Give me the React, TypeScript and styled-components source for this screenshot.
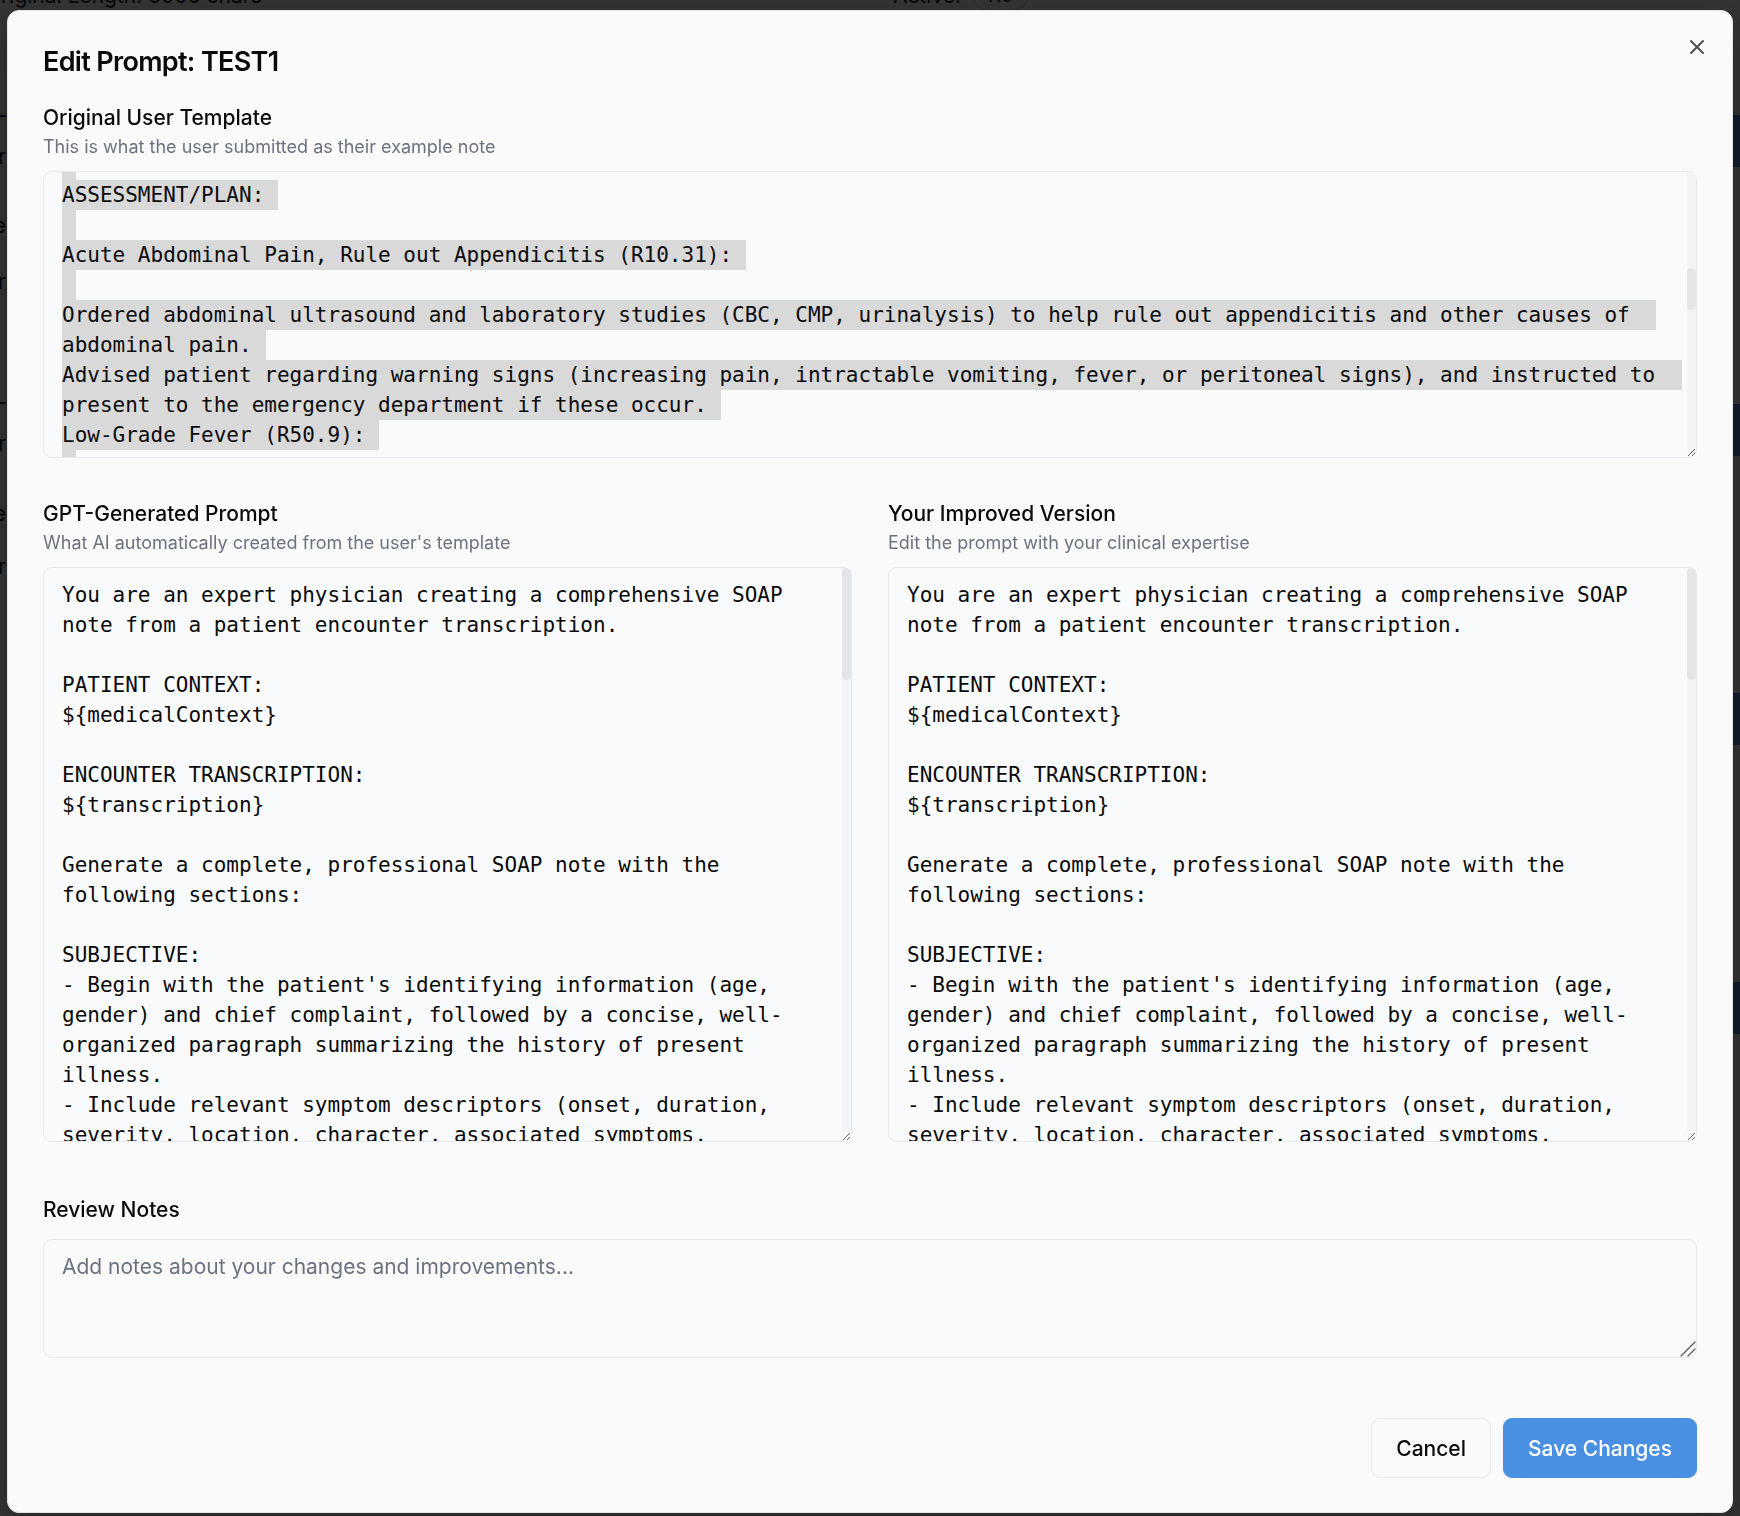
import React, { useLayoutEffect, useRef } from "react";
import styled, { createGlobalStyle } from "styled-components";
import { X } from "lucide-react";

const UI = `Inter, "Noto Sans", "Liberation Sans", sans-serif`;
const MONO = `"DejaVu Sans Mono", "Liberation Mono", monospace`;

const GlobalStyle = createGlobalStyle`
  *, *::before, *::after { box-sizing: border-box; }
  html, body { margin: 0; padding: 0; }
  body {
    background: #ffffff;
    font-family: ${UI};
    overflow: hidden;
  }
`;

/* ---------- page behind the dialog ---------- */

const Page = styled.div`
  width: 1740px;
  height: 1516px;
  overflow: hidden;
  background: #ffffff;
  font-family: ${UI};
  font-size: 21px;
  color: #111827;
`;

const StatsRow = styled.div`
  display: grid;
  grid-template-columns: 896px auto auto;
  align-items: center;
  column-gap: 12px;
  height: 30px;
  line-height: 30px;
  margin-top: -19px;
  margin-left: -15px;
  justify-content: start;
`;

const StatText = styled.span`
  white-space: nowrap;
`;

const StatBadge = styled.span`
  display: inline-flex;
  align-items: center;
  height: 30px;
  padding: 0 14px;
  border: 1px solid #d1d5db;
  border-radius: 15px;
  font-size: 18px;
`;

const PageBody = styled.div`
  display: grid;
  grid-template-columns: 6px 1fr;
`;

const EdgeColumn = styled.div`
  display: flex;
  flex-direction: column;
  align-items: flex-end;
  padding-top: 90px;
  line-height: 30px;
`;

const EdgeText = styled.span<{ $gap: number }>`
  white-space: nowrap;
  margin-top: ${(p) => p.$gap}px;
`;

const CardList = styled.div`
  display: flex;
  flex-direction: column;
  align-items: flex-end;
  gap: 237px;
  padding-top: 104px;
`;

const PageButton = styled.div`
  width: 140px;
  height: 52px;
  background: #5f91e1;
  border-radius: 9px 0 0 9px;
`;

/* ---------- overlay + dialog ---------- */

const Overlay = styled.div`
  position: fixed;
  inset: 0;
  background: rgba(0, 0, 0, 0.8);
`;

const Dialog = styled.div`
  position: fixed;
  top: 10px;
  left: 7px;
  width: 1726px;
  height: 1503px;
  display: flex;
  flex-direction: column;
  padding: 35px;
  background: #fafafa;
  border: 1px solid #e4e4e7;
  border-radius: 12px;
  box-shadow: 0 15px 40px rgba(0, 0, 0, 0.25);
  font-family: ${UI};
  color: #0a0a0a;
`;

const CloseButton = styled.button`
  position: absolute;
  top: 24px;
  right: 23px;
  width: 24px;
  height: 24px;
  padding: 0;
  border: none;
  background: none;
  color: #0a0a0a;
  opacity: 0.7;
  display: flex;
  align-items: center;
  justify-content: center;
  cursor: pointer;
`;

const Title = styled.h2`
  margin: 0;
  font-size: 27px;
  line-height: 32px;
  font-weight: 600;
  letter-spacing: -0.675px;
  color: #0a0a0a;
`;

const Section = styled.section<{ $gap: number }>`
  display: flex;
  flex-direction: column;
  margin-top: ${(p) => p.$gap}px;
  min-width: 0;
`;

const FieldLabel = styled.label`
  font-size: 21px;
  line-height: 21px;
  font-weight: 500;
  color: #0a0a0a;
`;

const FieldHint = styled.p`
  margin: 7px 0 0;
  font-size: 18px;
  line-height: 24px;
  color: #6b7280;
`;

/* a frame that holds a field and the things drawn over its edge */
const FieldFrame = styled.div<{ $gap: number }>`
  position: relative;
  margin-top: ${(p) => p.$gap}px;
`;

const ScrollTrack = styled.div`
  position: absolute;
  top: 1px;
  right: 1px;
  bottom: 10px;
  width: 9px;
  background: #f3f4f6;
  border-top-right-radius: 8px;
  pointer-events: none;
`;

const ScrollThumb = styled.div<{ $top: number; $height: number }>`
  position: absolute;
  left: 0;
  right: 0;
  top: ${(p) => p.$top}px;
  height: ${(p) => p.$height}px;
  background: #e3e5e9;
  border-radius: 5px;
`;

const ResizeGrip = styled.svg`
  position: absolute;
  right: 1px;
  bottom: 1px;
  width: 16px;
  height: 16px;
  pointer-events: none;
`;

const TemplateBox = styled.div`
  height: 287px;
  padding: 12px 18px;
  border: 1px solid #e8e9ec;
  border-radius: 9px;
  background: #f9fafb;
  overflow-y: scroll;
  resize: vertical;
  font-family: ${MONO};
  font-size: 21px;
  line-height: 30px;
  color: #0a0a0a;
`;

const TemplateLine = styled.div`
  min-height: 30px;
  white-space: pre-wrap;
`;

const Selected = styled.span`
  background: #d9d9d9;
  padding: 2.78px 14px 2.78px 0;
  -webkit-box-decoration-break: clone;
  box-decoration-break: clone;
`;

const PromptGrid = styled.div<{ $gap: number }>`
  display: grid;
  grid-template-columns: 1fr 1fr;
  column-gap: 36px;
  margin-top: ${(p) => p.$gap}px;
`;

const PromptArea = styled.textarea`
  display: block;
  width: 100%;
  height: 575px;
  padding: 12px 18px;
  border: 1px solid #e8e9ec;
  border-radius: 9px;
  background: #f9fafb;
  resize: vertical;
  outline: none;
  font-family: ${MONO};
  font-size: 21px;
  line-height: 30px;
  color: #0a0a0a;
`;

const NotesArea = styled.textarea`
  display: block;
  width: 100%;
  height: 119px;
  padding: 12px 18px;
  border: 1px solid #e8e9ec;
  border-radius: 9px;
  background: #fafafa;
  resize: none;
  outline: none;
  font-family: ${UI};
  font-size: 21px;
  line-height: 30px;
  color: #0a0a0a;
  &::placeholder { color: #6b7280; }
`;

const Footer = styled.div`
  display: flex;
  justify-content: flex-end;
  gap: 12px;
  margin-top: 60px;
`;

const ActionButton = styled.button<{ $primary?: boolean }>`
  height: 60px;
  padding: 0 24px;
  border-radius: 9px;
  border: 1px solid ${(p) => (p.$primary ? "#4a90e2" : "#e8e9ec")};
  background: ${(p) => (p.$primary ? "#4a90e2" : "#fafafa")};
  color: ${(p) => (p.$primary ? "#ffffff" : "#0a0a0a")};
  font-family: ${UI};
  font-size: 21px;
  font-weight: 500;
  cursor: pointer;
`;

/* ---------- data ---------- */

const TEMPLATE_LINES: string[] = [
  "SUBJECTIVE:",
  "",
  "Chief Complaint: Abdominal pain and low-grade fever for 2 days.",
  "",
  "HPI: 24-year-old female presents with periumbilical pain that has migrated to the right lower quadrant.",
  "Pain is constant, rated 6/10, worse with movement. Associated with nausea, decreased appetite, and subjective fevers.",
  "Denies vomiting, diarrhea, dysuria, vaginal discharge, or recent travel.",
  "",
  "OBJECTIVE:",
  "",
  "Vitals: T 100.4 F, HR 96, BP 118/74, RR 16, SpO2 99% on room air.",
  "General: Alert, uncomfortable-appearing, in mild distress.",
  "Abdomen: Tenderness to palpation in the right lower quadrant with voluntary guarding. Positive Rovsing sign. No rebound.",
  "Cardiovascular: Regular rate and rhythm, no murmurs.",
  "Lungs: Clear to auscultation bilaterally.",
  "",
  "Labs: Point-of-care urine pregnancy test negative. CBC and CMP pending.",
  "Imaging: Right lower quadrant ultrasound ordered.",
  "",
  "MDM: Presentation concerning for early appendicitis; differential includes ovarian pathology and mesenteric adenitis.",
  "",
  "ASSESSMENT/PLAN:",
  "",
  "Acute Abdominal Pain, Rule out Appendicitis (R10.31):",
  "",
  "Ordered abdominal ultrasound and laboratory studies (CBC, CMP, urinalysis) to help rule out appendicitis and other causes of abdominal pain.",
  "Advised patient regarding warning signs (increasing pain, intractable vomiting, fever, or peritoneal signs), and instructed to present to the emergency department if these occur.",
  "Low-Grade Fever (R50.9):",
  "",
  "Recommended acetaminophen 650 mg every 6 hours as needed for fever and discomfort.",
  "Encouraged oral hydration as tolerated.",
  "",
  "Nausea (R11.0):",
  "",
  "Prescribed ondansetron 4 mg ODT every 8 hours as needed for nausea.",
  "",
  "Disposition:",
  "",
  "Patient will be contacted with ultrasound and laboratory results.",
  "If imaging is positive, will refer to general surgery for urgent evaluation.",
  "Follow up in clinic in 24-48 hours or sooner if symptoms worsen.",
  "",
  "Patient Education:",
  "",
  "Discussed the suspected diagnosis, planned workup, and warning signs requiring emergency care.",
  "Patient verbalized understanding and agreement with the plan.",
  "",
  "Time Spent:",
  "",
  "Total time spent on the date of the encounter was 35 minutes, including history, examination, and counseling.",
  "",
  "Signed electronically by: Dr. J. Smith, MD",
  "Date: 03/14/2025",
  "",
  "Addendum:",
  "",
  "Ultrasound results reviewed; findings discussed with patient by phone.",
  "Plan updated accordingly.",
  "",
];

const PROMPT = [
  "You are an expert physician creating a comprehensive SOAP note from a patient encounter transcription.",
  "",
  "PATIENT CONTEXT:",
  "${medicalContext}",
  "",
  "ENCOUNTER TRANSCRIPTION:",
  "${transcription}",
  "",
  "Generate a complete, professional SOAP note with the following sections:",
  "",
  "SUBJECTIVE:",
  "- Begin with the patient's identifying information (age, gender) and chief complaint, followed by a concise, well-organized paragraph summarizing the history of present illness.",
  "- Include relevant symptom descriptors (onset, duration, severity, location, character, associated symptoms, aggravating and alleviating factors).",
  "- Document pertinent positives and negatives from the review of systems.",
  "- Note relevant past medical history, current medications, allergies, and social history when mentioned.",
  "",
  "OBJECTIVE:",
  "- Record vital signs if they were provided.",
  "- Document physical examination findings organized by body system.",
  "- Include any point-of-care test results, laboratory values, or imaging discussed during the encounter.",
  "",
  "ASSESSMENT/PLAN:",
  "- List each diagnosis or problem as a separate heading with the appropriate ICD-10 code in parentheses.",
  "- Under each problem, describe the clinical reasoning and the differential diagnoses that were considered.",
  "- Document the management plan, including diagnostic tests ordered, medications prescribed (with dose, route, and frequency), and referrals.",
  "- Include patient education provided, return precautions, and follow-up timing.",
  "",
  "FORMATTING REQUIREMENTS:",
  "- Use clear section headings in all capital letters.",
  "- Write in complete, professional sentences using standard medical terminology and accepted abbreviations.",
  "- Do not include information that was not discussed in the transcription.",
  "- If information for a section is not available, write \"Not documented.\"",
  "- Keep the note concise while preserving all clinically relevant details.",
  "- Match the tone, structure, and level of detail of the physician's example note.",
  "",
  "Return only the completed SOAP note with no additional commentary.",
].join("\n");

/* ---------- components ---------- */

function Scrollbar({ top, height }: { top: number; height: number }) {
  return (
    <ScrollTrack>
      <ScrollThumb $top={top} $height={height} />
    </ScrollTrack>
  );
}

function TemplateViewer() {
  const ref = useRef<HTMLDivElement>(null);
  useLayoutEffect(() => {
    if (ref.current) ref.current.scrollTop = 634;
  }, []);
  return (
    <FieldFrame $gap={12}>
      <TemplateBox ref={ref}>
        {TEMPLATE_LINES.map((line, i) => (
          <TemplateLine key={i}>
            <Selected>{line}</Selected>
          </TemplateLine>
        ))}
      </TemplateBox>
      <Scrollbar top={96} height={42} />
    </FieldFrame>
  );
}

function PromptField({ readOnly }: { readOnly?: boolean }) {
  return (
    <FieldFrame $gap={12}>
      <PromptArea readOnly={readOnly} defaultValue={PROMPT} />
      <Scrollbar top={0} height={112} />
    </FieldFrame>
  );
}

export default function App() {
  return (
    <>
      <GlobalStyle />
      <Page>
        <StatsRow>
          <StatText>Original Length: 5000 chars</StatText>
          <StatText>Active:</StatText>
          <StatBadge>No</StatBadge>
        </StatsRow>
        <PageBody>
          <EdgeColumn>
            <EdgeText $gap={0}>—</EdgeText>
            <EdgeText $gap={11}>Summarizer</EdgeText>
            <EdgeText $gap={39}>Template</EdgeText>
            <EdgeText $gap={26}>Provider</EdgeText>
            <EdgeText $gap={91}>—</EdgeText>
            <EdgeText $gap={11}>Summarizer</EdgeText>
            <EdgeText $gap={40}>Template</EdgeText>
            <EdgeText $gap={23}>Provider</EdgeText>
          </EdgeColumn>
          <CardList>
            <PageButton />
            <PageButton />
            <PageButton />
            <PageButton />
          </CardList>
        </PageBody>
      </Page>
      <Overlay />
      <Dialog role="dialog" aria-label="Edit Prompt: TEST1">
        <CloseButton aria-label="Close">
          <X size={24} strokeWidth={2} />
        </CloseButton>
        <Title>Edit Prompt: TEST1</Title>

        <Section $gap={29}>
          <FieldLabel>Original User Template</FieldLabel>
          <FieldHint>This is what the user submitted as their example note</FieldHint>
          <TemplateViewer />
        </Section>

        <PromptGrid $gap={45}>
          <Section $gap={0}>
            <FieldLabel>GPT-Generated Prompt</FieldLabel>
            <FieldHint>What AI automatically created from the user's template</FieldHint>
            <PromptField readOnly />
          </Section>
          <Section $gap={0}>
            <FieldLabel>Your Improved Version</FieldLabel>
            <FieldHint>Edit the prompt with your clinical expertise</FieldHint>
            <PromptField />
          </Section>
        </PromptGrid>

        <Section $gap={57}>
          <FieldLabel>Review Notes</FieldLabel>
          <FieldFrame $gap={19}>
            <NotesArea placeholder="Add notes about your changes and improvements..." />
            <ResizeGrip viewBox="0 0 16 16" aria-hidden="true">
              <path d="M1 15 L15 1 M8 15 L15 8" stroke="#5f6368" strokeWidth="1.4" strokeLinecap="round" fill="none" />
            </ResizeGrip>
          </FieldFrame>
        </Section>

        <Footer>
          <ActionButton>Cancel</ActionButton>
          <ActionButton $primary>Save Changes</ActionButton>
        </Footer>
      </Dialog>
    </>
  );
}
